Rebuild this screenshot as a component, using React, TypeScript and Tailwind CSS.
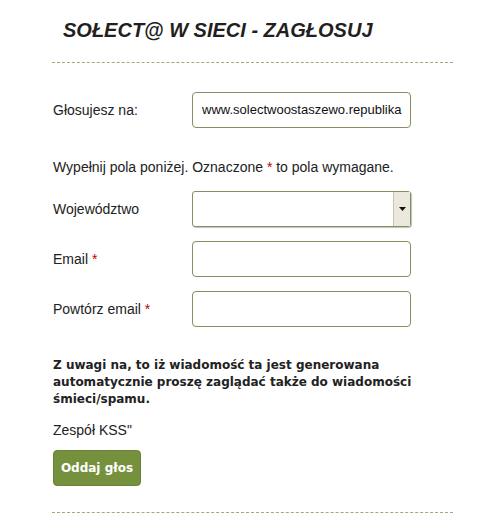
const font = { fontFamily: '"Liberation Sans", Arial, sans-serif' };
const wide = { fontFamily: '"DejaVu Sans", Verdana, sans-serif' };

function Dashed() {
  return <div className="h-px border-t border-dashed border-[#a3a77a] w-[401px]" />;
}

function Field({ label, required, children }: { label: string; required?: boolean; children?: React.ReactNode }) {
  return (
    <div className="flex items-center">
      <div className="w-[139px] text-[14px] text-[#222]">
        {label}
        {required && <span className="text-[#c00000]"> *</span>}
      </div>
      {children}
    </div>
  );
}

function TextBox({ value }: { value?: string }) {
  return (
    <div className="w-[219px] h-[36px] rounded-[4px] border border-[#8a8d5e] bg-white flex items-center px-[9px] text-[13px] text-[#111] overflow-hidden whitespace-nowrap">
      {value}
    </div>
  );
}

export default function App() {
  return (
    <div className="w-[496px] h-[532px] bg-white pl-[52px] pt-[18px]" style={font}>
      <h1 className="pl-[11px] text-[20px] font-bold italic text-[#231f20] leading-[24px]">
        SOŁECT@ W SIECI - ZAGŁOSUJ
      </h1>
      <div className="mt-[20px]">
        <Dashed />
      </div>

      <div className="pl-[1px] mt-[29px]">
        <Field label="Głosujesz na:">
          <TextBox value="www.solectwoostaszewo.republika" />
        </Field>

        <p className="mt-[29px] text-[14px] text-[#222]">
          Wypełnij pola poniżej. Oznaczone <span className="text-[#c00000]">*</span> to pola wymagane.
        </p>

        <div className="mt-[13px] flex flex-col gap-[14px]">
          <Field label="Województwo">
            <div className="w-[219px] h-[36px] rounded-[3px] border border-[#8a8d5e] bg-white flex justify-end shadow-[1px_1px_1px_rgba(0,0,0,0.25)]">
              <div className="w-[17px] h-full bg-[#ebe9db] border-l border-[#c8c5b2] flex items-center justify-center">
                <svg width="7" height="4" viewBox="0 0 7 4">
                  <path d="M0 0h7L3.5 4z" fill="#111" />
                </svg>
              </div>
            </div>
          </Field>
          <Field label="Email" required>
            <TextBox />
          </Field>
          <Field label="Powtórz email" required>
            <TextBox />
          </Field>
        </div>

        <p className="mt-[30px] w-[380px] text-[12px] leading-[17px] font-bold text-[#222]" style={wide}>
          Z uwagi na, to iż wiadomość ta jest generowana automatycznie proszę zaglądać także do wiadomości śmieci/spamu.
        </p>

        <p className="mt-[12px] text-[14px] text-[#222]">Zespół KSS"</p>

        <button className="mt-[9px] w-[88px] h-[36px] rounded-[4px] bg-[#76913e] border border-[#6a8236] text-white font-bold text-[12px]" style={wide}>
          Oddaj głos
        </button>
      </div>

      <div className="mt-[26px]">
        <Dashed />
      </div>
    </div>
  );
}
